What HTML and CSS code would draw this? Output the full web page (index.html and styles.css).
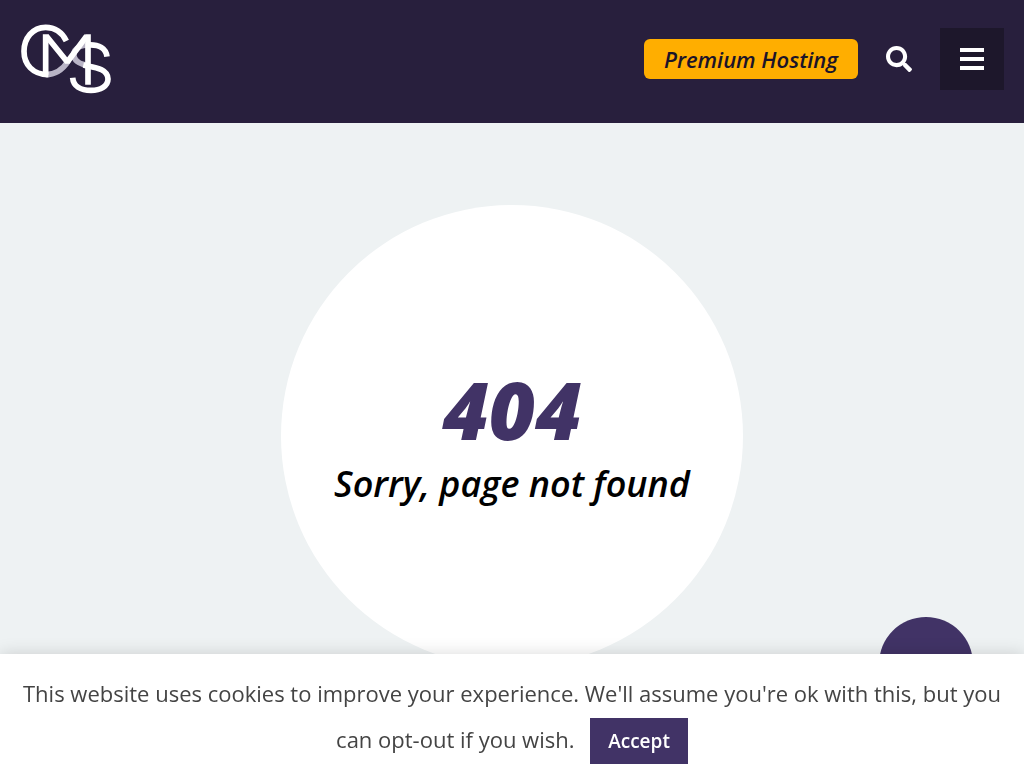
FILE: index.html
```html
<!DOCTYPE html>
<html lang="en">
<head>
    <meta charset="UTF-8">
    <meta name="viewport" content="width=device-width, initial-scale=1.0">
    <title>Page not found</title>
    <link rel="stylesheet" href="styles.css">
</head>
<body>
    <header class="header">
        <a class="logo" href="#" aria-label="CMS home">
            <svg width="92" height="72" viewBox="60 70 276 216" fill="none" stroke="#fff" stroke-width="17">
                <path stroke="#b9b4c6" d="M137 225C168 225 188 210 205 184M264 136C236 136 218 152 222 170C226 188 244 193 264 198"/>
                <path d="M199 124C187 98 164 83 137 83C98 83 72 116 72 155C72 194 98 225 145 225"/>
                <path d="M137 225V104M264 104V255"/>
                <path stroke-linejoin="bevel" d="M139 109L202 187L260 109"/>
                <path d="M264 136C297 134 318 146 321 171M250 196C282 203 324 206 324 238C324 259 302 272 273 272C241 272 220 259 218 234"/>
            </svg>
        </a>
        <div class="header-actions">
            <a class="hosting" href="#">Premium Hosting</a>
            <button class="search" type="button" aria-label="Search">
                <svg width="26" height="26" viewBox="0 0 512 512" fill="#fff">
                    <path d="M505 442.700L405.300 343c-4.500-4.500-10.600-7-17-7H372c27.600-35.300 44-79.700 44-128C416 93.100 322.900 0 208 0S0 93.100 0 208s93.100 208 208 208c48.300 0 92.700-16.400 128-44v16.300c0 6.400 2.500 12.500 7 17l99.700 99.700c9.400 9.400 24.600 9.400 33.900 0l28.300-28.300c9.400-9.400 9.400-24.600.1-34zM208 336c-70.700 0-128-57.200-128-128 0-70.700 57.200-128 128-128 70.700 0 128 57.200 128 128 0 70.700-57.200 128-128 128z"/>
                </svg>
            </button>
            <button class="menu" type="button" aria-label="Menu">
                <svg width="24" height="22" viewBox="0 0 24 22" fill="#fff">
                    <rect width="24" height="4"/>
                    <rect y="9" width="24" height="4"/>
                    <rect y="18" width="24" height="4"/>
                </svg>
            </button>
        </div>
    </header>

    <main class="content">
        <div class="circle">
            <h1>404</h1>
            <p>Sorry, page not found</p>
        </div>
    </main>

    <a class="to-top" href="#" aria-label="Back to top"></a>

    <div class="cookie-bar">
        This website uses cookies to improve your experience. We'll assume you're ok with this, but you can opt-out if you wish.
        <button class="accept" type="button">Accept</button>
    </div>
</body>
</html>
```
FILE: styles.css
```css
* {
    box-sizing: border-box;
}
body {
    margin: 0;
    min-height: 100vh;
    background-color: #eef2f3;
    font-family: "Open Sans", "Noto Sans", sans-serif;
    color: #444;
}
button {
    border: none;
    padding: 0;
    background: none;
    font-family: inherit;
    cursor: pointer;
}
svg {
    display: block;
}
.header {
    display: flex;
    justify-content: space-between;
    align-items: center;
    padding: 23px 20px 28px;
    background-color: #281f3d;
}
.header-actions {
    display: flex;
    align-items: center;
}
.hosting {
    padding: 0 20px;
    border-radius: 6px;
    background-color: #ffae00;
    color: #1c1429;
    font-size: 22px;
    font-style: italic;
    font-weight: 600;
    line-height: 40px;
    text-decoration: none;
}
.search {
    margin: 0 28px;
}
.menu {
    display: flex;
    justify-content: center;
    align-items: center;
    width: 64px;
    height: 62px;
    background-color: #1d172b;
}
.content {
    display: flex;
    justify-content: center;
    padding: 82px 20px 0;
}
.circle {
    display: flex;
    flex-direction: column;
    justify-content: center;
    align-items: center;
    width: 100%;
    max-width: 462px;
    aspect-ratio: 1;
    padding-top: 8px;
    border-radius: 50%;
    background-color: #fff;
    font-style: italic;
}
.circle h1 {
    margin: 0;
    color: #413366;
    font-size: 80px;
    font-weight: 800;
    line-height: 88px;
}
.circle p {
    margin: 0;
    color: #000;
    font-size: 36px;
    font-weight: 600;
    line-height: 62px;
}
.to-top {
    position: fixed;
    right: 51px;
    bottom: 70px;
    width: 94px;
    height: 94px;
    border-radius: 50%;
    background-color: #413366;
}
.cookie-bar {
    position: fixed;
    right: 0;
    bottom: 0;
    left: 0;
    padding: 16px 20px 17px;
    background-color: #fff;
    box-shadow: 0 0 16px rgba(0, 0, 0, 0.15);
    font-size: 22px;
    line-height: 46px;
    text-align: center;
}
.accept {
    margin-left: 10px;
    padding: 0 18px;
    background-color: #413366;
    color: #fff;
    font-size: 19px;
    font-weight: 600;
    line-height: 46px;
}
```
